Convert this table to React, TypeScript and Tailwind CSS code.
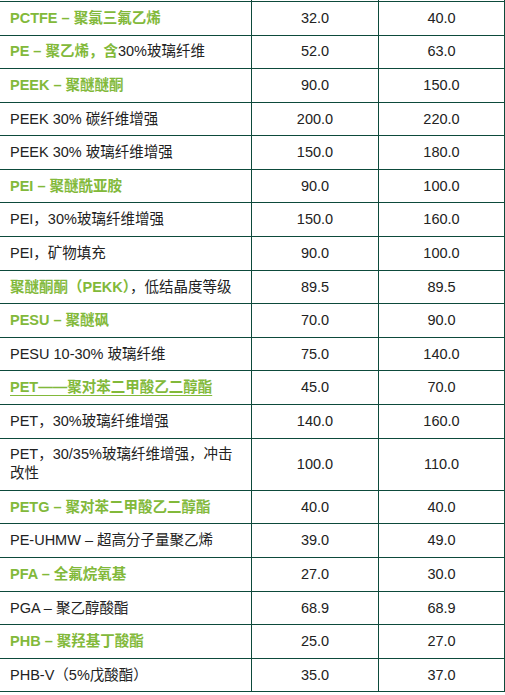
import React from "react";

type Part = { t: string; g?: boolean; u?: boolean };
type Row = { name: Part[]; a: string; b: string };

const rows: Row[] = [
  { name: [{ t: "PCTFE – 聚氯三氟乙烯", g: true }], a: "32.0", b: "40.0" },
  { name: [{ t: "PE – 聚乙烯，含", g: true }, { t: "30%玻璃纤维" }], a: "52.0", b: "63.0" },
  { name: [{ t: "PEEK – 聚醚醚酮", g: true }], a: "90.0", b: "150.0" },
  { name: [{ t: "PEEK 30% 碳纤维增强" }], a: "200.0", b: "220.0" },
  { name: [{ t: "PEEK 30% 玻璃纤维增强" }], a: "150.0", b: "180.0" },
  { name: [{ t: "PEI – 聚醚酰亚胺", g: true }], a: "90.0", b: "100.0" },
  { name: [{ t: "PEI，30%玻璃纤维增强" }], a: "150.0", b: "160.0" },
  { name: [{ t: "PEI，矿物填充" }], a: "90.0", b: "100.0" },
  { name: [{ t: "聚醚酮酮（PEKK）", g: true }, { t: "，低结晶度等级" }], a: "89.5", b: "89.5" },
  { name: [{ t: "PESU – 聚醚砜", g: true }], a: "70.0", b: "90.0" },
  { name: [{ t: "PESU 10-30% 玻璃纤维" }], a: "75.0", b: "140.0" },
  { name: [{ t: "PET——聚对苯二甲酸乙二醇酯", g: true, u: true }], a: "45.0", b: "70.0" },
  { name: [{ t: "PET，30%玻璃纤维增强" }], a: "140.0", b: "160.0" },
  { name: [{ t: "PET，30/35%玻璃纤维增强，冲击改性" }], a: "100.0", b: "110.0" },
  { name: [{ t: "PETG – 聚对苯二甲酸乙二醇酯", g: true }], a: "40.0", b: "40.0" },
  { name: [{ t: "PE-UHMW – 超高分子量聚乙烯" }], a: "39.0", b: "49.0" },
  { name: [{ t: "PFA – 全氟烷氧基", g: true }], a: "27.0", b: "30.0" },
  { name: [{ t: "PGA – 聚乙醇酸酯" }], a: "68.9", b: "68.9" },
  { name: [{ t: "PHB – 聚羟基丁酸酯", g: true }], a: "25.0", b: "27.0" },
  { name: [{ t: "PHB-V（5%戊酸酯）" }], a: "35.0", b: "37.0" },
];

const line = "border-[#0d4a3b]";

function TRow({ row }: { row: Row }) {
  return (
    <div className={`flex border-b ${line}`}>
      <div className={`w-[252px] shrink-0 border-r ${line} pl-[10px] pr-[8px] py-[6.9px] flex items-center`}>
        <div>
          {row.name.map((p, i) => (
            <span
              key={i}
              className={
                p.g
                  ? p.u
                    ? "font-bold text-[#82b93a] underline underline-offset-[3px]"
                    : "font-bold text-[#82b93a]"
                  : "text-[#222222]"
              }
            >
              {p.t}
            </span>
          ))}
        </div>
      </div>
      <div className={`w-[127px] shrink-0 border-r ${line} py-[6.9px] flex items-center justify-center text-[#222222]`}>
        {row.a}
      </div>
      <div className={`w-[126px] shrink-0 border-r ${line} py-[6.9px] flex items-center justify-center text-[#222222]`}>
        {row.b}
      </div>
    </div>
  );
}

export default function App() {
  return (
    <div
      className="w-[505px] h-[695px] overflow-hidden bg-white text-[14.5px] leading-[18.8px]"
      style={{ fontFamily: '"Liberation Sans", "Noto Sans CJK SC", sans-serif' }}
    >
      <div className={`-ml-px w-[506px] border-l ${line}`}>
        <div className={`flex h-[2px] border-b ${line}`}>
          <div className={`w-[252px] shrink-0 border-r ${line}`} />
          <div className={`w-[127px] shrink-0 border-r ${line}`} />
          <div className={`w-[126px] shrink-0 border-r ${line}`} />
        </div>
        {rows.map((r, i) => (
          <TRow key={i} row={r} />
        ))}
      </div>
    </div>
  );
}
